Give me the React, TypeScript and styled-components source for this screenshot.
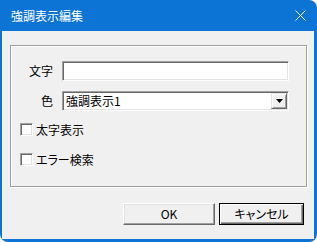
import React from 'react';
import styled, { createGlobalStyle } from 'styled-components';

const Global = createGlobalStyle`
  html, body { margin: 0; padding: 0; background: #fff; }
  body {
    font-family: "Noto Sans CJK JP", "Noto Sans", sans-serif;
    font-size: 12px;
    color: #000;
    font-feature-settings: "palt";
  }
  * { box-sizing: border-box; }
`;

const Window = styled.div`
  width: 317px;
  height: 242px;
  background: #0c74d4;
  border-radius: 0 8px 8px 8px;
  display: flex;
  flex-direction: column;
  overflow: hidden;
`;

const TitleBar = styled.div`
  height: 31px;
  flex-shrink: 0;
  display: flex;
  align-items: center;
  justify-content: space-between;
  padding: 0 11px 0 11px;
  color: #fff;
  font-size: 12px;
`;

const Title = styled.span`
  line-height: 1;
`;

const Client = styled.div`
  flex: 1;
  margin: 0 3px 3px 2px;
  background: #f0f0f0;
  padding: 14px 7px 0 8px;
  display: flex;
  flex-direction: column;
`;

const GroupBox = styled.div`
  height: 142px;
  border: 1px solid #a0a0a0;
  box-shadow: inset 1px 1px 0 #fff, 1px 1px 0 #fff;
  padding-top: 15px;
  display: flex;
  flex-direction: column;
`;

const FieldGrid = styled.div`
  display: grid;
  grid-template-columns: 42px 227px;
  column-gap: 9px;
  row-gap: 10px;
  align-items: center;
`;

const Label = styled.span`
  text-align: right;
  line-height: 20px;
`;

const Sunken = styled.div`
  height: 20px;
  background: #fff;
  border: 1px solid;
  border-color: #a0a0a0 #fff #fff #a0a0a0;
  box-shadow: inset 1px 1px 0 #696969, inset -1px -1px 0 #e3e3e3;
`;

const Combo = styled(Sunken)`
  display: flex;
  align-items: center;
  padding: 0 1px 0 3px;
`;

const ComboText = styled.span`
  flex: 1;
  line-height: 16px;
`;

const DropButton = styled.div`
  width: 16px;
  height: 16px;
  background: #f0f0f0;
  border: 1px solid;
  border-color: #e3e3e3 #696969 #696969 #e3e3e3;
  box-shadow: inset 1px 1px 0 #fff, inset -1px -1px 0 #a0a0a0;
  display: flex;
  align-items: center;
  justify-content: center;
`;

const CheckRow = styled.div<{ $mt: number }>`
  display: flex;
  align-items: center;
  gap: 3px;
  height: 13px;
  padding-left: 9px;
  margin-top: ${(p) => p.$mt}px;
`;

const CheckBox = styled.span`
  width: 13px;
  height: 13px;
  background: #fff;
  border: 1px solid;
  border-color: #a0a0a0 #fff #fff #a0a0a0;
  box-shadow: inset 1px 1px 0 #696969, inset -1px -1px 0 #e3e3e3;
`;

const ButtonRow = styled.div`
  display: flex;
  justify-content: flex-end;
  gap: 4px;
  margin-top: 16px;
  padding-right: 3px;
`;

const Button = styled.div<{ $w: number; $default?: boolean }>`
  width: ${(p) => p.$w}px;
  height: 22px;
  display: flex;
  align-items: center;
  justify-content: center;
  background: #f0f0f0;
  border: 1px solid;
  border-color: ${(p) => (p.$default ? '#000' : '#fff #696969 #696969 #fff')};
  box-shadow: ${(p) =>
    p.$default
      ? 'inset 1px 1px 0 #fff, inset -1px -1px 0 #696969, inset -2px -2px 0 #a0a0a0'
      : 'inset -1px -1px 0 #a0a0a0, inset 1px 1px 0 #e3e3e3'};
  line-height: 1;
`;

export default function App() {
  return (
    <>
      <Global />
      <Window>
        <TitleBar>
          <Title>強調表示編集</Title>
          <svg width="11" height="11" viewBox="0 0 11 11">
            <path d="M0.5 0.5 L10.5 10.5 M10.5 0.5 L0.5 10.5" stroke="#fff" strokeWidth="1" />
          </svg>
        </TitleBar>
        <Client>
          <GroupBox>
            <FieldGrid>
              <Label>文字</Label>
              <Sunken />
              <Label>色</Label>
              <Combo>
                <ComboText>強調表示1</ComboText>
                <DropButton>
                  <svg width="7" height="4" viewBox="0 0 7 4">
                    <path d="M0 0 H7 L3.5 4 Z" fill="#000" />
                  </svg>
                </DropButton>
              </Combo>
            </FieldGrid>
            <CheckRow $mt={12}>
              <CheckBox />
              <span>太字表示</span>
            </CheckRow>
            <CheckRow $mt={17}>
              <CheckBox />
              <span>エラー検索</span>
            </CheckRow>
          </GroupBox>
          <ButtonRow>
            <Button $w={92}>OK</Button>
            <Button $w={85} $default>キャンセル</Button>
          </ButtonRow>
        </Client>
      </Window>
    </>
  );
}
